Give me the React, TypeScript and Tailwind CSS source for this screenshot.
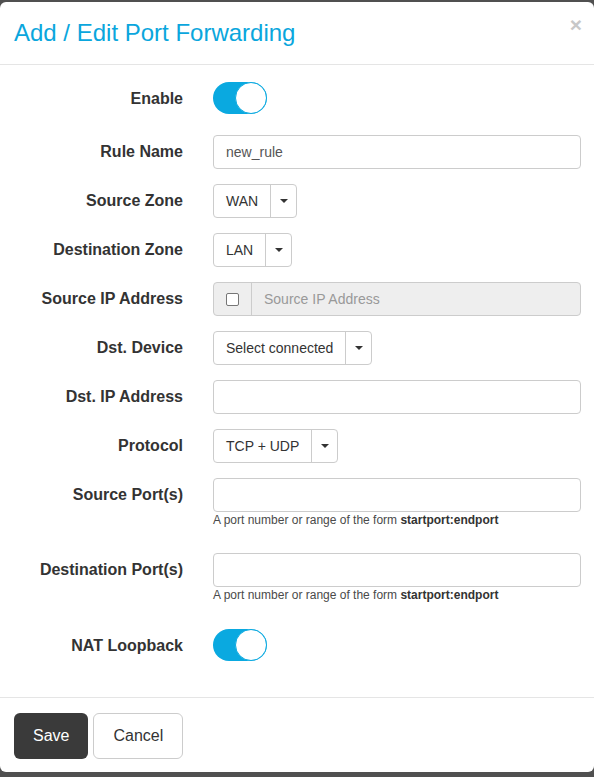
const blue = "bg-[#0aa9e0]"

const Toggle = () => (
  <div className={`relative -mt-[2px] w-[54px] h-[32px] rounded-full ${blue}`}>
    <div className="absolute right-0 top-0 w-[32px] h-[32px] rounded-full bg-white border border-[#0aa9e0]" />
  </div>
)

const Caret = () => (
  <span className="w-0 h-0 border-x-[4px] border-x-transparent border-t-[4px] border-t-[#333]" />
)

const SelectBtn = ({ label }: { label: string }) => (
  <div className="inline-flex h-[34px] border border-[#ccc] rounded-[4px] bg-white text-[14px] text-[#333]">
    <span className="flex items-center px-3">{label}</span>
    <span className="flex items-center justify-center w-[26px] border-l border-[#ccc]">
      <Caret />
    </span>
  </div>
)

const TextInput = ({ value }: { value?: string }) => (
  <div className="flex items-center h-[34px] w-full border border-[#ccc] rounded-[4px] bg-white px-3 text-[14px] text-[#555]">
    {value}
  </div>
)

const Help = () => (
  <div className="mt-[1px] leading-[14px] text-[12px] text-[#4a4a4a]">
    A port number or range of the form <b className="text-[#333]">startport:endport</b>
  </div>
)

const Row = ({
  label,
  children,
  className = "mb-[15px]",
  help,
}: {
  label: string
  children: React.ReactNode
  className?: string
  help?: boolean
}) => (
  <div className={`flex ${className}`}>
    <div className="w-[168px] h-[34px] flex items-center justify-end text-[16px] font-bold text-[#333]">
      {label}
    </div>
    <div className="ml-[30px] flex-1">
      <div className="h-[34px] flex items-center">{children}</div>
      {help && <Help />}
    </div>
  </div>
)

export default function App() {
  return (
    <div className="min-h-[777px] bg-[#505050] pt-[2px] font-['Liberation_Sans',Arial,sans-serif]">
      <div className="h-[770px] bg-white rounded-[6px] flex flex-col">
        <div className="h-[63px] flex items-center justify-between pl-[14px] pr-[12px] border-b border-[#e5e5e5]">
          <h1 className="text-[24px] text-[#0aa6dd] leading-none">Add / Edit Port Forwarding</h1>
          <span className="text-[21px] font-bold text-[#c8c8c8] leading-none -mt-[18px]">×</span>
        </div>

        <div className="flex-1 pl-[15px] pr-[13px] pt-[17px]">
          <Row label="Enable" className="mb-[19px]">
            <Toggle />
          </Row>
          <Row label="Rule Name">
            <TextInput value="new_rule" />
          </Row>
          <Row label="Source Zone">
            <SelectBtn label="WAN" />
          </Row>
          <Row label="Destination Zone">
            <SelectBtn label="LAN" />
          </Row>
          <Row label="Source IP Address">
            <div className="flex h-[34px] w-full border border-[#ccc] rounded-[4px] bg-[#eee]">
              <span className="flex items-center justify-center w-[38px] border-r border-[#ccc]">
                <span className="w-[13px] h-[13px] border border-[#767676] rounded-[2px] bg-white" />
              </span>
              <span className="flex items-center px-3 text-[14px] text-[#999]">Source IP Address</span>
            </div>
          </Row>
          <Row label="Dst. Device">
            <SelectBtn label="Select connected" />
          </Row>
          <Row label="Dst. IP Address">
            <TextInput />
          </Row>
          <Row label="Protocol">
            <SelectBtn label="TCP + UDP" />
          </Row>
          <Row label="Source Port(s)" help className="mb-[26px]">
            <TextInput />
          </Row>
          <Row label="Destination Port(s)" help className="mb-[27px]">
            <TextInput />
          </Row>
          <Row label="NAT Loopback" className="mb-0">
            <Toggle />
          </Row>
        </div>

        <div className="h-[75px] border-t border-[#e5e5e5] pt-[15px] pl-[14px] flex gap-[5px]">
          <button className="h-[46px] px-[19px] rounded-[6px] bg-[#3a3a3a] text-white text-[16px]">Save</button>
          <button className="h-[46px] px-[19px] rounded-[6px] bg-white border border-[#ccc] text-[#333] text-[16px]">
            Cancel
          </button>
        </div>
      </div>
    </div>
  )
}
